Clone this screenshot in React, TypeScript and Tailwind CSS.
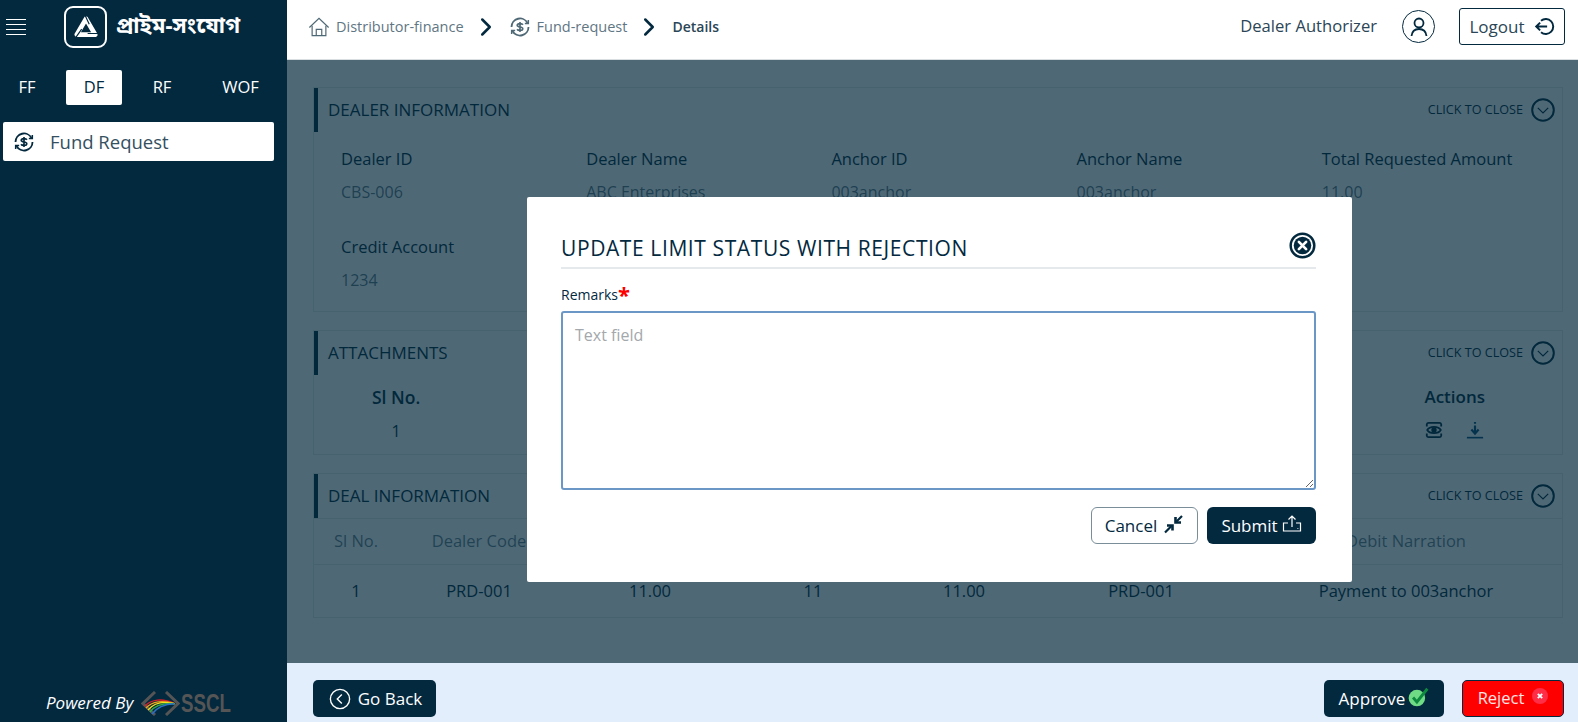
import { ChevronRight } from "lucide-react";

const FONT = "font-['Segoe_UI','Open_Sans','Noto_Sans',sans-serif]";

function FundIcon({ className }: { className?: string }) {
  return (
    <svg viewBox="0 0 24 24" fill="none" stroke="currentColor" strokeWidth="2.200" className={className}>
      <path d="M1.800 12A10.200 10.200 0 0 1 21 7.200" />
      <path d="M22.200 12A10.200 10.200 0 0 1 3 16.800" />
      <path d="M22 3.500v4.200h-4.200" strokeWidth="1.800" />
      <path d="M2 20.500v-4.200h4.200" strokeWidth="1.800" />
      <path d="M15.500 9.300c-.5-.9-1.700-1.300-3.500-1.300-2 0-3.300.7-3.300 2s1.300 1.700 3.300 2 3.300.7 3.300 2-1.300 2-3.300 2c-1.800 0-3-.4-3.500-1.300M12 6v12" strokeWidth="2" />
    </svg>
  );
}

function HomeIcon({ className }: { className?: string }) {
  return (
    <svg viewBox="0 0 24 24" fill="none" stroke="currentColor" strokeWidth="1.300" className={className}>
      <path d="M1.500 12.500 12 2.500l10.500 10" />
      <path d="M4.500 10.500V21.500h15V10.500" />
      <path d="M9 21.500v-7h6v7" />
    </svg>
  );
}

function CircleChevron() {
  return (
    <svg viewBox="0 0 24 24" fill="none" stroke="#03293f" strokeWidth="2" className="h-[24px] w-[24px]">
      <circle cx="12" cy="12" r="10.800" />
      <path d="M6.800 9.800 12 15l5.200-5.200" strokeWidth="1.200" />
    </svg>
  );
}

function CardHeader({ title }: { title: string }) {
  return (
    <div className="flex h-[44px] items-center justify-between border-l-4 border-[#03293f] pl-[10px] pr-[7px]">
      <span className="text-[17px] text-[#03293f]">{title}</span>
      <span className="flex items-center gap-[8px] text-[12.600px] text-[#03293f]">
        CLICK TO CLOSE
        <CircleChevron />
      </span>
    </div>
  );
}

function Field({ label, value, width }: { label: string; value: string; width: string }) {
  return (
    <div className={`${width} shrink-0 whitespace-nowrap`}>
      <div className="text-[16.500px] leading-[22px] text-[#03293f]">{label}</div>
      <div className="mt-[11px] text-[16px] leading-[22px] text-[#03293f]/65">{value}</div>
    </div>
  );
}

// headers of the middle columns sit behind the modal, so they stay empty
const dealColumns = [
  { id: "sl", head: "Sl No.", cell: "1", width: "w-[84px]" },
  { id: "code", head: "Dealer Code", cell: "PRD-001", width: "w-[162px]" },
  { id: "amount", head: "", cell: "11.00", width: "w-[180px]" },
  { id: "tenor", head: "", cell: "11", width: "w-[146px]" },
  { id: "disbursed", head: "", cell: "11.00", width: "w-[156px]" },
  { id: "ref", head: "", cell: "PRD-001", width: "w-[198px]" },
  { id: "narration", head: "Debit Narration", cell: "Payment to 003anchor", width: "w-[322px] pl-[10px]" },
];

export default function App() {
  return (
    <div className={`flex h-[722px] w-[1578px] overflow-hidden bg-white ${FONT}`}>
      {/* Sidebar */}
      <aside className="flex w-[287px] shrink-0 flex-col bg-[#03293f] text-white">
        <div className="flex h-[60px] items-center pb-[6px] pl-[6px]">
          <div className="flex w-[20px] flex-col gap-[3.500px]">
            <span className="h-[1.500px] bg-white" />
            <span className="h-[1.500px] bg-white" />
            <span className="h-[1.500px] bg-white" />
            <span className="h-[1.500px] bg-white" />
          </div>
          <div className="ml-[38px] flex h-[42px] w-[43px] items-center justify-center rounded-[9px] border-2 border-white">
            <svg viewBox="0 0 24 24" className="h-[26px] w-[26px]" fill="none" strokeLinejoin="round">
              <path d="M12 4.500 20.500 19H3.500z" stroke="white" strokeWidth="4.400" />
              <path d="M12 11.500 14.500 16H9.500z" fill="#03293f" />
              <path d="M11 1 15 9.500M23.500 18H13.500M2 22.500 8 14" stroke="#03293f" strokeWidth="1.100" />
            </svg>
          </div>
          <span className="ml-[9px] text-[22px] font-bold font-['Noto_Sans_Bengali','Noto_Sans',sans-serif]">প্রাইম-সংযোগ</span>
        </div>

        <div className="mt-[10px] flex items-center text-[16.500px]">
          <span className="w-[54px] text-center">FF</span>
          <span className="ml-[12px] flex h-[35px] w-[56px] items-center justify-center rounded-[2px] bg-white text-[#03293f]">DF</span>
          <span className="ml-[12px] w-[56px] text-center">RF</span>
          <span className="ml-[12px] w-[77px] text-center">WOF</span>
        </div>

        <div className="mx-[3px] mt-[17px] flex h-[39px] w-[271px] items-center gap-[16px] rounded-[2px] bg-white pl-[11px] text-[18.500px] text-[#35505f]">
          <FundIcon className="h-[20px] w-[20px] text-[#03293f]" />
          Fund Request
        </div>

        <div className="mb-[6px] mt-auto flex items-center pl-[46px]">
          <span className="text-[17px] italic">Powered By</span>
          <svg viewBox="0 0 39 25" className="ml-[8px] h-[25px] w-[39px]" fill="none">
            <path d="M14 1 2 12.500 14 24" stroke="#555" strokeWidth="3" />
            <path d="M25 1l12 11.500L25 24" stroke="#555" strokeWidth="3" />
            <path d="M4 15C10 8 22 7 33.500 12.700" stroke="#d6202a" strokeWidth="1.400" />
            <path d="M5 17C11 10 22 9 33.500 12.700" stroke="#f3a01b" strokeWidth="1.400" />
            <path d="M7 19C13 12 23 10 33.500 12.700" stroke="#f5e11b" strokeWidth="1.400" />
            <path d="M9 21C14 14 24 12 33.500 12.700" stroke="#35a84a" strokeWidth="1.400" />
            <path d="M11 23C16 16 25 13 33.500 12.700" stroke="#2a6fc4" strokeWidth="1.400" />
          </svg>
          <span className="ml-[1px] origin-left scale-x-[0.72] text-[26px] font-bold leading-none text-[#555] font-['Liberation_Sans',sans-serif]">SSCL</span>
        </div>
      </aside>

      <div className="flex min-w-0 flex-1 flex-col">
        {/* Top bar */}
        <header className="flex h-[60px] shrink-0 items-center border-b border-[#d9dee1] pb-[6px] pl-[21px] pr-[13px]">
          <HomeIcon className="h-[22px] w-[22px] text-[#4e6875]" />
          <span className="ml-[6px] text-[14.500px] text-[#5f7683]">Distributor-finance</span>
          <ChevronRight className="ml-[7px] h-[30px] w-[30px] text-[#03293f]" strokeWidth={2} />
          <FundIcon className="ml-[9px] h-[20px] w-[20px] text-[#4e6875]" />
          <span className="ml-[7px] text-[14.500px] text-[#5f7683]">Fund-request</span>
          <ChevronRight className="ml-[7px] h-[30px] w-[30px] text-[#03293f]" strokeWidth={2} />
          <span className="ml-[8px] text-[14px] font-semibold text-[#2b4656]">Details</span>

          <span className="ml-auto text-[16.600px] text-[#2b4656]">Dealer Authorizer</span>
          <span className="ml-[25px] flex h-[33px] w-[33px] items-center justify-center rounded-full border border-[#03293f]">
            <svg viewBox="0 0 24 24" fill="none" stroke="#03293f" strokeWidth="1.800" className="h-[24px] w-[24px]">
              <circle cx="12" cy="8" r="4.500" />
              <path d="M4.500 21c.5-4.500 3.500-7 7.500-7s7 2.500 7.500 7" />
            </svg>
          </span>
          <button className="ml-[24px] flex h-[37px] w-[106px] items-center justify-center gap-[9px] rounded-[3px] border border-[#03293f] text-[17px] text-[#2b4656]">
            Logout
            <svg viewBox="0 0 24 24" fill="none" stroke="#03293f" strokeWidth="2.200" className="h-[21px] w-[21px]">
              <path d="M8 5.500a8.500 8.500 0 1 1 0 13" />
              <path d="M15 12H3M7 7.500 2.500 12 7 16.500" />
            </svg>
          </button>
        </header>

        {/* Page body */}
        <main className="relative flex min-h-0 flex-1 flex-col gap-[18px] pl-[26px] pr-[15px] pt-[27px]">
          <section className="h-[225px] border border-[#03293f]/10">
            <CardHeader title="DEALER INFORMATION" />
            <div className="pl-[27px] pt-[16px]">
              <div className="flex">
                <Field label="Dealer ID" value="CBS-006" width="w-[245.200px]" />
                <Field label="Dealer Name" value="ABC Enterprises" width="w-[245.200px]" />
                <Field label="Anchor ID" value="003anchor" width="w-[245.200px]" />
                <Field label="Anchor Name" value="003anchor" width="w-[245.200px]" />
                <Field label="Total Requested Amount" value="11.00" width="w-[220px]" />
              </div>
              <div className="mt-[33px]">
                <Field label="Credit Account" value="1234" width="w-[245px]" />
              </div>
            </div>
          </section>

          <section className="h-[125px] border border-[#03293f]/10">
            <CardHeader title="ATTACHMENTS" />
            <div className="flex justify-between pl-[58px] pr-[77px] pt-[9px] text-[#03293f]">
              <div className="text-center">
                <div className="text-[17.500px] font-semibold">Sl No.</div>
                <div className="mt-[9px] text-[16px]">1</div>
              </div>
              <div>
                <div className="text-[17px] font-semibold">Actions</div>
                <div className="mt-[11px] flex items-center gap-[23px] pl-[1px]">
                  <svg viewBox="0 0 20 20" fill="none" stroke="#03293f" strokeWidth="2" className="h-[18px] w-[18px]">
                    <path d="M2 6V3.500A2 2 0 0 1 4 2h12a2 2 0 0 1 2 1.500V6M2 14v2.500A2 2 0 0 0 4 18h12a2 2 0 0 0 2-1.500V14" />
                    <path d="M2.500 10C5 5.500 15 5.500 17.500 10 15 14.500 5 14.500 2.500 10z" />
                    <circle cx="10" cy="10" r="2" fill="#03293f" />
                  </svg>
                  <svg viewBox="0 0 20 20" fill="none" stroke="#0b4a7a" strokeWidth="2.400" className="h-[18px] w-[18px]">
                    <path d="M10 1v2M10 5v9M6 9.500l4 4.500 4-4.500" />
                    <path d="M1 18.500h18" strokeWidth="1.800" />
                  </svg>
                </div>
              </div>
            </div>
          </section>

          <section className="h-[145px] border border-[#03293f]/10">
            <CardHeader title="DEAL INFORMATION" />
            <div className="flex h-[47px] items-center border-y border-[#03293f]/10 text-[16.500px] text-[#03293f]/60">
              {dealColumns.map((col) => (
                <div key={col.id} className={`${col.width} shrink-0 whitespace-nowrap text-center`}>{col.head}</div>
              ))}
            </div>
            <div className="flex h-[52px] items-center text-[16.500px] text-[#03293f]">
              {dealColumns.map((col) => (
                <div key={col.id} className={`${col.width} shrink-0 whitespace-nowrap text-center`}>{col.cell}</div>
              ))}
            </div>
          </section>

          {/* Dim layer */}
          <div className="absolute inset-0 bg-[#03283a]/70" />

          {/* Modal */}
          <div className="absolute left-[240px] top-[137px] h-[385px] w-[825px] rounded-[2px] bg-white pl-[34px] pr-[36px] pt-[33px]">
            <div className="flex h-[39px] items-start justify-between border-b-2 border-[#e5e9ec]">
              <span className="text-[21px] leading-[37px] tracking-[0.600px] text-[#03293f]">UPDATE LIMIT STATUS WITH REJECTION</span>
              <svg viewBox="0 0 24 24" className="mt-[2px] h-[27px] w-[27px]" fill="none">
                <circle cx="12" cy="12" r="10.500" stroke="#03293f" strokeWidth="2.200" />
                <circle cx="12" cy="12" r="7.800" fill="#03293f" />
                <path d="M8.800 8.800l6.400 6.400M15.200 8.800l-6.400 6.400" stroke="white" strokeWidth="2.400" strokeLinecap="round" />
              </svg>
            </div>
            <div className="mt-[15px] flex h-[20px] items-center text-[14px] text-[#03293f]">
              Remarks<span className="text-[22px] font-bold leading-none text-[#ff0000]">*</span>
            </div>
            <textarea
              placeholder="Text field"
              className="mt-[7px] block h-[179px] w-full rounded-[3px] border-2 border-[#6b97c6] px-[12px] py-[10px] text-[16px] outline-none placeholder:text-[#a3a8ac]"
            />
            <div className="mt-[17px] flex justify-end gap-[9px]">
              <button className="flex h-[37px] w-[107px] items-center justify-center gap-[7px] rounded-[6px] border-[1.500px] border-[#7a8e99] text-[17px] text-[#03293f]">
                Cancel
                <svg viewBox="0 0 20 20" fill="none" stroke="#03293f" strokeWidth="2.200" className="-mt-[4px] h-[20px] w-[20px]">
                  <path d="M18 2l-6.500 6.500M1 18.500 7.500 12" />
                  <path d="M11.500 3v5.500H17M8.500 16.500V11.500H3" strokeWidth="2.600" />
                </svg>
              </button>
              <button className="flex h-[37px] w-[109px] items-center justify-center gap-[4px] rounded-[6px] bg-[#03293f] text-[17px] text-white">
                Submit
                <svg viewBox="0 0 20 20" fill="none" stroke="white" strokeWidth="1.200" className="-mt-[4px] h-[20px] w-[20px]">
                  <path d="M10 13V2M6.500 5.500 10 2l3.500 3.500" />
                  <path d="M6 9H1.500v8h17V9H14" />
                  <path d="M15.500 14.500h.8" />
                </svg>
              </button>
            </div>
          </div>
        </main>

        {/* Bottom action bar */}
        <footer className="flex h-[59px] shrink-0 items-start justify-between bg-[#e2eefc] pl-[26px] pr-[14px] pt-[17px]">
          <button className="flex h-[37px] w-[123px] items-center justify-center gap-[7px] rounded-[5px] bg-[#03293f] pl-[2px] text-[17px] text-white">
            <svg viewBox="0 0 24 24" fill="none" stroke="white" strokeWidth="1.500" className="h-[22px] w-[22px]">
              <circle cx="12" cy="12" r="10.500" />
              <path d="M14 7l-5 5 5 5" />
            </svg>
            Go Back
          </button>
          <div className="flex gap-[18px]">
            <button className="flex h-[37px] w-[120px] items-center justify-center gap-[2px] rounded-[5px] bg-[#03293f] text-[17px] text-white">
              Approve
              <svg viewBox="0 0 20 20" className="-mt-[4px] h-[22px] w-[22px]" fill="none">
                <circle cx="9" cy="11" r="7.500" fill="#6fdc85" />
                <path d="M5.500 10.500 9 14.500 18.500 2.500" stroke="#0e8a3e" strokeWidth="2.600" />
              </svg>
            </button>
            <button className="flex h-[37px] w-[102px] items-center justify-center gap-[8px] rounded-[5px] border border-[#03293f] bg-[#ff0000] text-[16.500px] text-white/90">
              Reject
              <svg viewBox="0 0 16 16" className="-mt-[6px] h-[16px] w-[16px]" fill="none">
                <circle cx="8" cy="8" r="8" fill="#ff2d46" />
                <path d="M5.800 5.800l4.400 4.400M10.200 5.800l-4.400 4.400" stroke="white" strokeWidth="1.800" />
              </svg>
            </button>
          </div>
        </footer>
      </div>
    </div>
  );
}
